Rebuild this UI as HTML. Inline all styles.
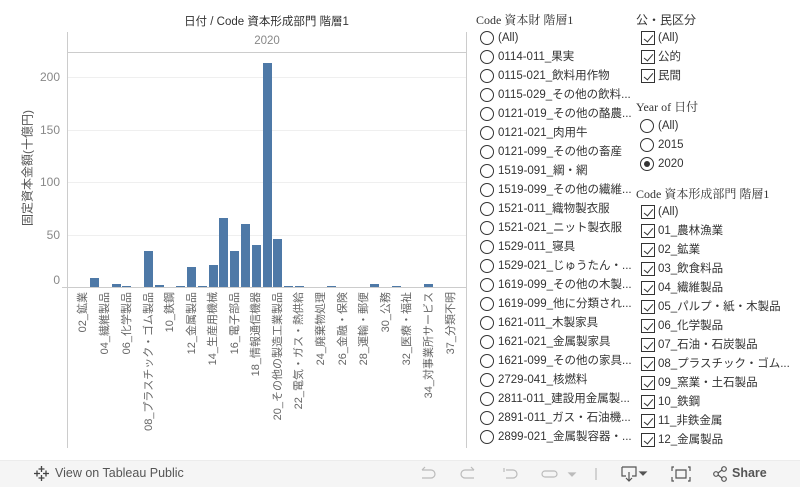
<!DOCTYPE html>
<html><head><meta charset="utf-8"><style>
*{margin:0;padding:0;box-sizing:border-box}
body{width:800px;height:487px;overflow:hidden;background:#fff;font-family:"Liberation Sans","Noto Sans CJK JP",sans-serif;position:relative;color:#333}
.a{position:absolute}
.bar{position:absolute;background:#4e79a7;width:9px}
.yl{position:absolute;left:40px;width:20px;text-align:right;font-size:12px;color:#888}
.grid{position:absolute;left:68px;width:398px;height:1px;background:#efefef}
.xl{position:absolute;top:292px;writing-mode:vertical-rl;text-orientation:sideways;transform:rotate(180deg);font-size:11px;color:#666;line-height:12px;white-space:nowrap}
.r{position:absolute;height:18px;line-height:18px;font-size:11.5px;color:#333;white-space:nowrap}
.r i{position:absolute;left:0;top:2px;width:14px;height:14px;border:1.2px solid #333;border-radius:50%}
.r span{position:absolute;left:18px}
.c i{border-radius:0;width:14px;height:14px;left:1px}
.c i:after{content:"";position:absolute;left:3.5px;top:0.5px;width:4px;height:8px;border:solid #333;border-width:0 1.2px 1.2px 0;transform:rotate(40deg)}
.h{position:absolute;font-family:"Liberation Serif","Noto Serif CJK SC",serif;font-size:12px;color:#333}
</style></head><body>
<div class="a" style="left:0;top:13px;width:533px;text-align:center;font-size:11.5px;color:#333">日付 / Code 資本形成部門 階層1</div>
<div class="a" style="left:67px;top:32px;width:1px;height:416px;background:#ccc"></div>
<div class="a" style="left:466px;top:32px;width:1px;height:416px;background:#ccc"></div>
<div class="a" style="left:67px;top:52px;width:400px;height:1px;background:#ccc"></div>
<div class="a" style="left:67px;top:35px;width:400px;text-align:center;font-size:11.5px;color:#888">2020</div>
<div class="grid" style="top:77px"></div><div class="grid" style="top:130px"></div><div class="grid" style="top:182px"></div><div class="grid" style="top:235px"></div>
<div class="a" style="left:62px;top:287px;width:405px;height:1px;background:#ccc"></div>
<div class="yl" style="top:70px">200</div><div class="yl" style="top:123px">150</div><div class="yl" style="top:175px">100</div><div class="yl" style="top:228px">50</div><div class="yl" style="top:273px">0</div>
<div class="a" style="left:27px;top:168px;transform:translate(-50%,-50%) rotate(-90deg);font-size:12px;color:#555;white-space:nowrap">固定資本金額(十億円)</div>
<div class="bar" style="left:90px;top:278px;height:9px"></div>
<div class="bar" style="left:112px;top:284px;height:3px"></div>
<div class="bar" style="left:122px;top:286px;height:1px"></div>
<div class="bar" style="left:144px;top:251px;height:36px"></div>
<div class="bar" style="left:155px;top:285px;height:2px"></div>
<div class="bar" style="left:176px;top:286px;height:1px"></div>
<div class="bar" style="left:187px;top:267px;height:20px"></div>
<div class="bar" style="left:198px;top:286px;height:1px"></div>
<div class="bar" style="left:209px;top:265px;height:22px"></div>
<div class="bar" style="left:219px;top:218px;height:69px"></div>
<div class="bar" style="left:230px;top:251px;height:36px"></div>
<div class="bar" style="left:241px;top:224px;height:63px"></div>
<div class="bar" style="left:252px;top:245px;height:42px"></div>
<div class="bar" style="left:263px;top:63px;height:224px"></div>
<div class="bar" style="left:273px;top:239px;height:48px"></div>
<div class="bar" style="left:284px;top:286px;height:1px"></div>
<div class="bar" style="left:295px;top:286px;height:1px"></div>
<div class="bar" style="left:327px;top:286px;height:1px"></div>
<div class="bar" style="left:370px;top:284px;height:3px"></div>
<div class="bar" style="left:392px;top:286px;height:1px"></div>
<div class="bar" style="left:424px;top:284px;height:3px"></div>
<div class="xl" style="left:77px">02_鉱業</div>
<div class="xl" style="left:99px">04_繊維製品</div>
<div class="xl" style="left:121px">06_化学製品</div>
<div class="xl" style="left:143px">08_プラスチック・ゴム製品</div>
<div class="xl" style="left:164px">10_鉄鋼</div>
<div class="xl" style="left:186px">12_金属製品</div>
<div class="xl" style="left:207px">14_生産用機械</div>
<div class="xl" style="left:229px">16_電子部品</div>
<div class="xl" style="left:250px">18_情報通信機器</div>
<div class="xl" style="left:272px">20_その他の製造工業製品</div>
<div class="xl" style="left:293px">22_電気・ガス・熱供給</div>
<div class="xl" style="left:315px">24_廃棄物処理</div>
<div class="xl" style="left:337px">26_金融・保険</div>
<div class="xl" style="left:358px">28_運輸・郵便</div>
<div class="xl" style="left:380px">30_公務</div>
<div class="xl" style="left:401px">32_医療・福祉</div>
<div class="xl" style="left:423px">34_対事業所サービス</div>
<div class="xl" style="left:445px">37_分類不明</div>

<div class="h" style="left:476px;top:11px">Code 資本財 階層1</div>
<div class="r" style="left:480px;top:29px"><i></i><span>(All)</span></div>
<div class="r" style="left:480px;top:48px"><i></i><span>0114-011_果実</span></div>
<div class="r" style="left:480px;top:67px"><i></i><span>0115-021_飲料用作物</span></div>
<div class="r" style="left:480px;top:86px"><i></i><span>0115-029_その他の飲料...</span></div>
<div class="r" style="left:480px;top:105px"><i></i><span>0121-019_その他の酪農...</span></div>
<div class="r" style="left:480px;top:124px"><i></i><span>0121-021_肉用牛</span></div>
<div class="r" style="left:480px;top:143px"><i></i><span>0121-099_その他の畜産</span></div>
<div class="r" style="left:480px;top:162px"><i></i><span>1519-091_綱・網</span></div>
<div class="r" style="left:480px;top:181px"><i></i><span>1519-099_その他の繊維...</span></div>
<div class="r" style="left:480px;top:200px"><i></i><span>1521-011_織物製衣服</span></div>
<div class="r" style="left:480px;top:219px"><i></i><span>1521-021_ニット製衣服</span></div>
<div class="r" style="left:480px;top:238px"><i></i><span>1529-011_寝具</span></div>
<div class="r" style="left:480px;top:257px"><i></i><span>1529-021_じゅうたん・...</span></div>
<div class="r" style="left:480px;top:276px"><i></i><span>1619-099_その他の木製...</span></div>
<div class="r" style="left:480px;top:295px"><i></i><span>1619-099_他に分類され...</span></div>
<div class="r" style="left:480px;top:314px"><i></i><span>1621-011_木製家具</span></div>
<div class="r" style="left:480px;top:333px"><i></i><span>1621-021_金属製家具</span></div>
<div class="r" style="left:480px;top:352px"><i></i><span>1621-099_その他の家具...</span></div>
<div class="r" style="left:480px;top:371px"><i></i><span>2729-041_核燃料</span></div>
<div class="r" style="left:480px;top:390px"><i></i><span>2811-011_建設用金属製...</span></div>
<div class="r" style="left:480px;top:409px"><i></i><span>2891-011_ガス・石油機...</span></div>
<div class="r" style="left:480px;top:428px"><i></i><span>2899-021_金属製容器・...</span></div>

<div class="h" style="left:636px;top:11px;font-family:'Liberation Sans','Noto Sans CJK JP',sans-serif">公・民区分</div>
<div class="r c" style="left:640px;top:29px"><i></i><span>(All)</span></div>
<div class="r c" style="left:640px;top:48px"><i></i><span>公的</span></div>
<div class="r c" style="left:640px;top:67px"><i></i><span>民間</span></div>
<div class="h" style="left:636px;top:98px">Year of 日付</div>
<div class="r" style="left:640px;top:117px"><i></i><span>(All)</span></div>
<div class="r" style="left:640px;top:136px"><i></i><span>2015</span></div>
<div class="r" style="left:640px;top:155px"><i><b style="position:absolute;left:3px;top:3px;width:6px;height:6px;border-radius:50%;background:#333"></b></i><span>2020</span></div>
<div class="h" style="left:636px;top:185px">Code 資本形成部門 階層1</div>
<div class="r c" style="left:640px;top:203px"><i></i><span>(All)</span></div>
<div class="r c" style="left:640px;top:222px"><i></i><span>01_農林漁業</span></div>
<div class="r c" style="left:640px;top:241px"><i></i><span>02_鉱業</span></div>
<div class="r c" style="left:640px;top:260px"><i></i><span>03_飲食料品</span></div>
<div class="r c" style="left:640px;top:279px"><i></i><span>04_繊維製品</span></div>
<div class="r c" style="left:640px;top:298px"><i></i><span>05_パルプ・紙・木製品</span></div>
<div class="r c" style="left:640px;top:317px"><i></i><span>06_化学製品</span></div>
<div class="r c" style="left:640px;top:336px"><i></i><span>07_石油・石炭製品</span></div>
<div class="r c" style="left:640px;top:355px"><i></i><span>08_プラスチック・ゴム...</span></div>
<div class="r c" style="left:640px;top:374px"><i></i><span>09_窯業・土石製品</span></div>
<div class="r c" style="left:640px;top:393px"><i></i><span>10_鉄鋼</span></div>
<div class="r c" style="left:640px;top:412px"><i></i><span>11_非鉄金属</span></div>
<div class="r c" style="left:640px;top:431px"><i></i><span>12_金属製品</span></div>

<div class="a" style="left:0;top:460px;width:800px;height:27px;background:#f5f5f5;border-top:1px solid #ececec"></div>
<svg class="a" style="left:33px;top:465px" width="17" height="17" viewBox="0 0 17 17" stroke="#444" stroke-width="1.3"><path d="M8.5 1v6M5.5 4h6M8.5 10v6M5.5 13h6M1 8.5h6M4 5.5v6M10 8.5h6M13 5.5v6"/></svg>
<div class="a" style="left:55px;top:466px;font-size:12.5px;color:#555">View on Tableau Public</div>
<svg class="a" style="left:418px;top:464px" width="200" height="20" fill="none" stroke="#bbb" stroke-width="1.2">
<path d="M4 6h9a4 4 0 0 1 0 8H4M4 6l3-3M4 6"/>
<path d="M56 6h-9a4 4 0 0 0 0 8h9M56 6l-3-3"/>
<path d="M86 4v4M88 6h7a4 4 0 0 1 0 8h-7"/>
<path d="M127 7h9a3 3 0 0 1 0 6h-9a3 3 0 0 1 0-6"/>
<path d="M151 9l3 3 3-3z" fill="#bbb"/>
<path d="M178 4v12"/>
</svg>
<svg class="a" style="left:620px;top:464px" width="160" height="20" fill="none" stroke="#555" stroke-width="1.2">
<path d="M2 3h14v9h-4M6 12H2V3M9 8v9M6 14l3 3 3-3"/>
<path d="M20 8l3 3 3-3z" fill="#555"/>
<path d="M54 3h-2v4M68 3h2v4M54 17h-2v-4M68 17h2v-4M56 6h10v8H56z"/>
<circle cx="96" cy="10" r="2.3"/><circle cx="104" cy="5" r="2.3"/><circle cx="104" cy="15" r="2.3"/><path d="M98 9l4-3M98 11l4 3"/>
</svg>
<div class="a" style="left:732px;top:466px;font-size:12.5px;color:#555;font-weight:bold">Share</div>
</body></html>
